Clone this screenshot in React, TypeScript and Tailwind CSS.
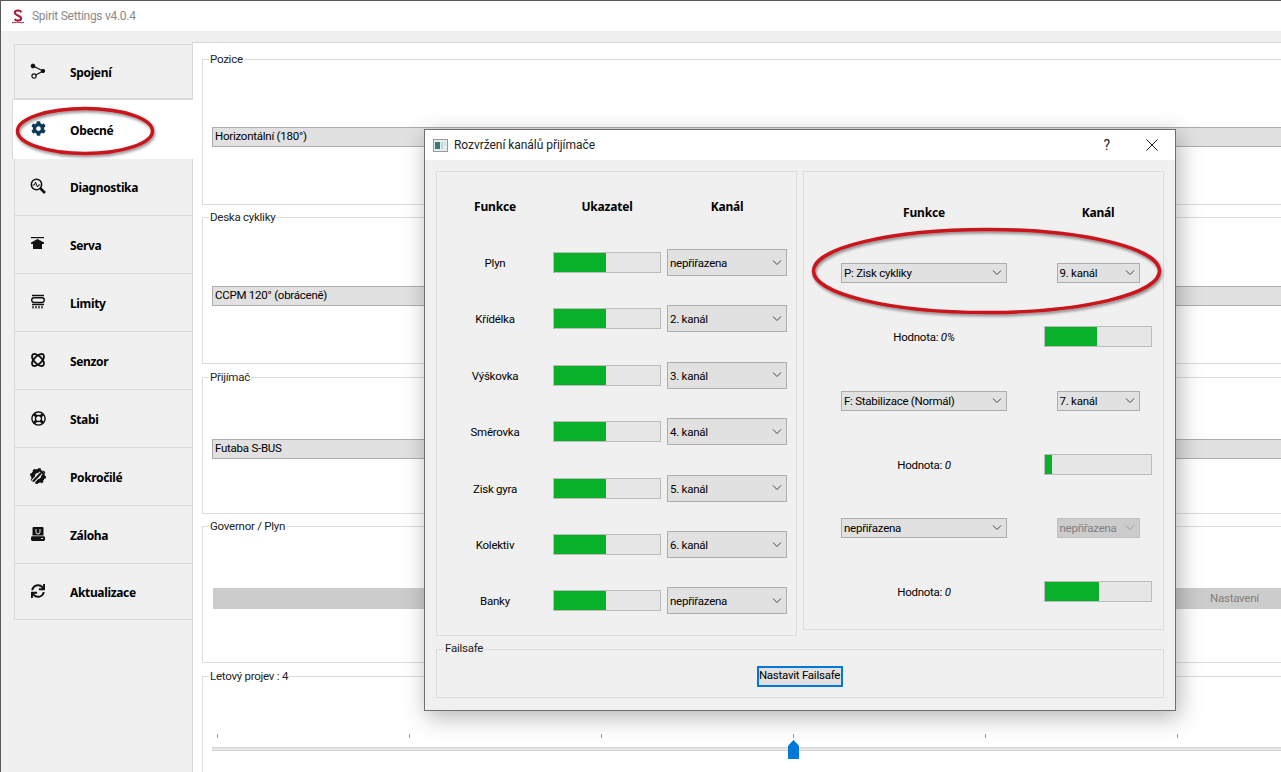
import React from "react";
import { FaCog, FaSync, FaRegLifeRing } from "react-icons/fa";

const font = "font-['Roboto','Noto_Sans',sans-serif]";
const sideBold = "font-['Noto_Sans',sans-serif] font-bold text-[12px] tracking-[-0.35px]";
const headBold = "font-['Noto_Sans',sans-serif] font-bold text-[12px] tracking-[-0.2px]";
const txt = "text-[11.5px] tracking-[-0.25px]";

const Spoj = () => (
  <svg width="16" height="16" viewBox="0 0 16 16" fill="none" stroke="#111">
    <path d="M3 3 L13 8 L4 13" strokeWidth="1.2" />
    <circle cx="3" cy="3" r="1.9" fill="#111" />
    <circle cx="13" cy="8" r="1.7" fill="#111" />
    <circle cx="4" cy="13" r="2.1" fill="#f0f0f0" strokeWidth="1.2" />
  </svg>
);
const Diag = () => (
  <svg width="16" height="16" viewBox="0 0 16 16" fill="none" stroke="#111">
    <circle cx="6.5" cy="6.5" r="5.2" strokeWidth="1.5" />
    <path d="M2.5 7h2l1-3 2 5 1-2h2" strokeWidth="1" />
    <path d="M10.5 10.5 L15 15" strokeWidth="2.6" />
  </svg>
);
const Serva = () => (
  <svg width="16" height="16" viewBox="0 0 16 16" fill="#111">
    <rect x="1" y="1" width="13" height="1.2" />
    <path d="M7.500 3 L1 6.500 V8 H3 V13 H12 V8 H14 V6.500 z" />
  </svg>
);
const Limity = () => (
  <svg width="16" height="16" viewBox="0 0 16 16" fill="none" stroke="#111">
    <path d="M2 1.500h12M2 10.500h12" strokeWidth="1.3" />
    <rect x="1.700" y="3.700" width="12.600" height="4.800" rx="2.400" strokeWidth="1.400" fill="#f0f0f0" />
    <path d="M3 12v2.500M6 12v2.500M9 12v2.500M12 12v2.500" strokeWidth="1.300" />
  </svg>
);
const Senzor = () => (
  <svg width="16" height="16" viewBox="0 0 16 16" fill="none" stroke="#111" strokeWidth="1.9">
    <ellipse cx="8" cy="8" rx="7.600" ry="3.800" transform="rotate(45 8 8)" />
    <ellipse cx="8" cy="8" rx="7.600" ry="3.800" transform="rotate(-45 8 8)" />
  </svg>
);
const Pokrocile = () => (
  <svg width="16" height="16" viewBox="0 0 16 16" fill="none">
    <circle cx="8" cy="8" r="5" stroke="#111" strokeWidth="4" />
    <circle cx="8" cy="8" r="7" stroke="#111" strokeWidth="2" strokeDasharray="2.500 3" />
    <path d="M3 13.500 L12.500 3.500" stroke="#f0f0f0" strokeWidth="4" />
    <path d="M3 13.500 L11 5" stroke="#111" strokeWidth="2" />
    <path d="M10 2.500l3.500 3.500" stroke="#111" strokeWidth="1.800" />
  </svg>
);
const Zaloha = () => (
  <svg width="16" height="16" viewBox="0 0 16 16">
    <path d="M3.500 1h9a1 1 0 0 1 1 1v7.500H2.500V2a1 1 0 0 1 1-1z" fill="#111" />
    <path d="M6 3v3a2 2 0 0 0 4 0V3" fill="none" stroke="#eee" strokeWidth="1" />
    <rect x="1" y="10.300" width="14" height="4.700" rx="1.400" fill="#111" />
    <rect x="11" y="12" width="2" height="1" fill="#eee" />
  </svg>
);

const tabs: [string, React.ReactNode][] = [
  ["Spojení", <Spoj />],
  ["Obecné", <FaCog size={15} color="#0d3a5a" />],
  ["Diagnostika", <Diag />],
  ["Serva", <Serva />],
  ["Limity", <Limity />],
  ["Senzor", <Senzor />],
  ["Stabi", <FaRegLifeRing size={15} color="#111" />],
  ["Pokročilé", <Pokrocile />],
  ["Záloha", <Zaloha />],
  ["Aktualizace", <FaSync size={14} color="#111" />],
];
const tabH = [55, 60, 57, 58, 58, 58, 58, 58, 58, 56];

const Chevron = ({ color = "#444" }: { color?: string }) => (
  <svg width="10" height="6" viewBox="0 0 10 6" fill="none" stroke={color} strokeWidth="1">
    <path d="M1 .5l4 4 4-4" />
  </svg>
);

function Combo({ text, w, h, disabled }: { text: string; w: string; h: string; disabled?: boolean }) {
  return (
    <div
      className={`${w} ${h} flex items-center justify-between pl-[2px] pr-[4px] shrink-0 border ${txt} ${
        disabled ? "bg-[#cccccc] border-[#bfbfbf] text-[#808080]" : "bg-[#e1e1e1] border-[#adadad] text-black"
      }`}
    >
      <span className="translate-y-[1px]">{text}</span>
      <Chevron color={disabled ? "#999" : "#444"} />
    </div>
  );
}

function Bar({ pct }: { pct: number }) {
  return (
    <div className="w-[108px] h-[21px] shrink-0 border border-[#bcbcbc] bg-[#e6e6e6]">
      <div className="h-full bg-[#09b12b]" style={{ width: `${pct}%` }} />
    </div>
  );
}

function Group({ title, h, mt, children }: { title: string; h: string; mt: string; children?: React.ReactNode }) {
  return (
    <div className={`relative ${h} ${mt} w-[1200px] shrink-0 border border-[#dcdcdc] flex items-center pl-[9px]`}>
      <span className={`absolute -top-[8px] left-[6px] bg-white px-[1px] ${txt} text-[#222] leading-[15px]`}>{title}</span>
      {children}
    </div>
  );
}

function ContentCombo({ text, mt }: { text: string; mt: string }) {
  return (
    <div className={`w-[1100px] h-[20px] ${mt} bg-[#e1e1e1] border border-[#adadad] flex items-center pl-[2px] ${txt} text-black`}>
      {text}
    </div>
  );
}

const leftRows: [string, string][] = [
  ["Plyn", "nepřiřazena"],
  ["Křídélka", "2. kanál"],
  ["Výškovka", "3. kanál"],
  ["Směrovka", "4. kanál"],
  ["Zisk gyra", "5. kanál"],
  ["Kolektiv", "6. kanál"],
  ["Banky", "nepřiřazena"],
];

const ticks = [0, 1, 2, 3, 4, 5];

export default function App() {
  return (
    <div className={`relative w-[1281px] h-[772px] overflow-hidden bg-[#f0f0f0] border-l border-t border-[#5a5a5a] ${font}`}>
      {/* window title */}
      <div className="h-[30px] bg-white flex items-center pl-[10px] gap-[7px] text-[12px] tracking-[-0.28px] text-[#8a8a8a]">
        <svg width="14" height="15" viewBox="0 0 14 15" fill="none" stroke="#a8183a" strokeWidth="2">
          <path d="M10.500 3.200C9 .8 4 1 3.800 3.600c-.2 2.800 6.700 3 6.400 6-.3 2.400-5 2.600-6.800 .6" />
          <path d="M1 13.500c2 .8 3.500-.6 6-.3s4 1.200 6 .1" strokeWidth="1" />
        </svg>
        <span>Spirit Settings v4.0.4</span>
      </div>

      {/* body */}
      <div className="flex pt-[11px] h-[741px]">
        {/* sidebar */}
        <div className="w-[191px] shrink-0 pl-[13px] pt-[2px] flex flex-col">
          {tabs.map(([label, icon], i) => {
            const active = i === 1;
            return (
              <div
                key={label}
                style={{ height: tabH[i] }}
                className={
                  active
                    ? "-ml-[2px] bg-white flex items-center pl-[17px] pt-[2px] border-l border-t border-[#dcdcdc] relative -mr-[1px]"
                    : `flex items-center pl-[15px] ${i === 0 || i === 2 ? "pt-[2px]" : "pt-[3px]"} border-l border-b border-[#d9d9d9] ${i === 0 ? "border-t" : ""}`
                }
              >
                <span className="w-[16px] flex justify-center -mt-[4px]">{icon}</span>
                <span className={`ml-[24px] text-black ${sideBold}`}>{label}</span>
              </div>
            );
          })}
        </div>

        {/* content */}
        <div className="flex-1 bg-white border-l border-t border-[#d9d9d9] pl-[9px] pt-[16px] overflow-hidden flex flex-col">
          <Group title="Pozice" h="h-[146px]" mt="mt-0">
            <ContentCombo text="Horizontální (180°)" mt="mt-[10px]" />
          </Group>
          <Group title="Deska cykliky" h="h-[147px]" mt="mt-[12px]">
            <ContentCombo text="CCPM 120° (obráceně)" mt="mt-[10px]" />
          </Group>
          <Group title="Přijímač" h="h-[137px]" mt="mt-[13px]">
            <ContentCombo text="Futaba S-BUS" mt="mt-[7px]" />
          </Group>
          <Group title="Governor / Plyn" h="h-[137px]" mt="mt-[12px]">
            <div className={`w-[1068px] h-[21px] mt-[8px] ml-[1px] bg-[#cccccc] flex items-center pl-[997px] ${txt} text-[#808080] whitespace-nowrap`}>
              <span>Nastavení</span>
            </div>
          </Group>
          <Group title="Letový projev : 4" h="h-[110px]" mt="mt-[13px]">
            <div className="relative w-[1190px] h-[110px]">
              <div className="flex gap-[191px] pl-[5px] pt-[58px]">
                {ticks.map((t) => (
                  <div key={t} className="w-px h-[4px] bg-[#9a9a9a] shrink-0" />
                ))}
              </div>
              <div className="mt-[9px] h-[4px] bg-[#e7e7e7] border border-[#d6d6d6]" />
              <div className="absolute left-[576px] top-[64px] w-[11px] h-[19px] bg-[#0078d7] [clip-path:polygon(50%_0,100%_30%,100%_100%,0_100%,0_30%)]" />
            </div>
          </Group>
        </div>
      </div>

      {/* dialog */}
      <div className="absolute left-[423px] top-[128px] w-[752px] h-[582px] bg-[#f0f0f0] border border-[#6e6e6e] shadow-[3px_6px_22px_rgba(0,0,0,0.3)]">
        <div className="h-[30px] bg-white flex items-center pl-[8px] text-[12px] tracking-[-0.05px] text-[#222]">
          <svg width="15" height="13" viewBox="0 0 15 13" className="mr-[6px]">
            <rect x=".5" y=".5" width="14" height="12" fill="#e8eef0" stroke="#9a9a9a" />
            <rect x="2" y="3" width="5" height="7" fill="#3c7a78" />
            <rect x="8" y="3" width="2" height="7" fill="#b9d8d6" />
            <rect x="11" y="3" width="2" height="4" fill="#cfe0de" />
          </svg>
          <span>Rozvržení kanálů přijímače</span>
          <span className="ml-auto text-[14px] text-[#222] mr-[36px]">?</span>
          <svg width="12" height="12" viewBox="0 0 12 12" stroke="#222" strokeWidth="1" className="mr-[17px]">
            <path d="M.5.5l11 11M11.500.5l-11 11" />
          </svg>
        </div>

        <div className="flex pl-[11px] pt-[11px] gap-[6px] items-start">
          {/* left panel */}
          <div className="w-[361px] h-[465px] border border-[#dcdcdc] pt-[6px]">
            <div className={`h-[56.4px] flex items-center pt-[2px] text-black ${headBold}`}>
              <span className="w-[116px] text-center">Funkce</span>
              <span className="w-[108px] text-center">Ukazatel</span>
              <span className="w-[126px] pl-[6px] text-center">Kanál</span>
            </div>
            {leftRows.map(([label, ch]) => (
              <div key={label} className={`h-[56.4px] flex items-center ${txt} text-black`}>
                <span className="w-[116px] text-center translate-y-[1px]">{label}</span>
                <Bar pct={49} />
                <div className="ml-[6px]">
                  <Combo text={ch} w="w-[120px]" h="h-[27px]" />
                </div>
              </div>
            ))}
          </div>

          {/* right panel */}
          <div className={`w-[361px] h-[459px] border border-[#dcdcdc] pt-[13px] pl-[37px] ${txt} text-black`}>
            <div className={`h-[56px] flex items-center text-black ${headBold}`}>
              <span className="w-[166px] text-center">Funkce</span>
              <span className="ml-[37px] w-[108px] text-center">Kanál</span>
            </div>
            <div className="h-[64px] flex items-center">
              <Combo text="P: Zisk cykliky" w="w-[166px]" h="h-[20px]" />
              <div className="ml-[37px] w-[108px] flex justify-center">
                <Combo text="9. kanál" w="w-[83px]" h="h-[20px]" />
              </div>
            </div>
            <div className="h-[64px] flex items-center">
              <span className="w-[166px] text-center translate-y-[1px]">
                Hodnota: <i>0%</i>
              </span>
              <div className="ml-[37px] -mt-[2px]">
                <Bar pct={49} />
              </div>
            </div>
            <div className="h-[64px] flex items-center">
              <Combo text="F: Stabilizace (Normál)" w="w-[166px]" h="h-[20px]" />
              <div className="ml-[37px] w-[108px] flex justify-center">
                <Combo text="7. kanál" w="w-[83px]" h="h-[20px]" />
              </div>
            </div>
            <div className="h-[64px] flex items-center">
              <span className="w-[166px] text-center translate-y-[1px]">
                Hodnota: <i>0</i>
              </span>
              <div className="ml-[37px] -mt-[2px]">
                <Bar pct={7} />
              </div>
            </div>
            <div className="h-[64px] flex items-center -mt-[1px]">
              <Combo text="nepřiřazena" w="w-[166px]" h="h-[20px]" />
              <div className="ml-[37px] w-[108px] flex justify-center">
                <Combo text="nepřiřazena" w="w-[83px]" h="h-[20px]" disabled />
              </div>
            </div>
            <div className="h-[64px] flex items-center">
              <span className="w-[166px] text-center translate-y-[1px]">
                Hodnota: <i>0</i>
              </span>
              <div className="ml-[37px] -mt-[1px]">
                <Bar pct={51} />
              </div>
            </div>
          </div>
        </div>

        {/* failsafe */}
        <div className="relative mx-[11px] mt-[13px] h-[49px] border border-[#dcdcdc] flex items-center justify-center">
          <span className={`absolute -top-[9px] left-[7px] bg-[#f0f0f0] px-[1px] ${txt} text-[#222] leading-[15px]`}>Failsafe</span>
          <div className={`w-[86px] h-[21px] mt-[5px] -ml-[1px] border-2 border-[#0078d7] bg-[#e1e1e1] flex items-center justify-center ${txt} text-black whitespace-nowrap`}>
            Nastavit Failsafe
          </div>
        </div>
      </div>

      {/* annotations */}
      <svg width="1281" height="772" className="absolute -left-px -top-px pointer-events-none" fill="none">
        <defs>
          <filter id="sh" x="-10%" y="-30%" width="120%" height="160%">
            <feDropShadow dx="1" dy="2" stdDeviation="1.6" floodColor="#000" floodOpacity="0.45" />
          </filter>
        </defs>
        <ellipse cx="85" cy="131" rx="67.500" ry="22.500" stroke="#c8141c" strokeWidth="3.500" filter="url(#sh)" />
        <ellipse cx="986.500" cy="271" rx="173" ry="41.500" stroke="#c8141c" strokeWidth="3.500" filter="url(#sh)" />
      </svg>
    </div>
  );
}
